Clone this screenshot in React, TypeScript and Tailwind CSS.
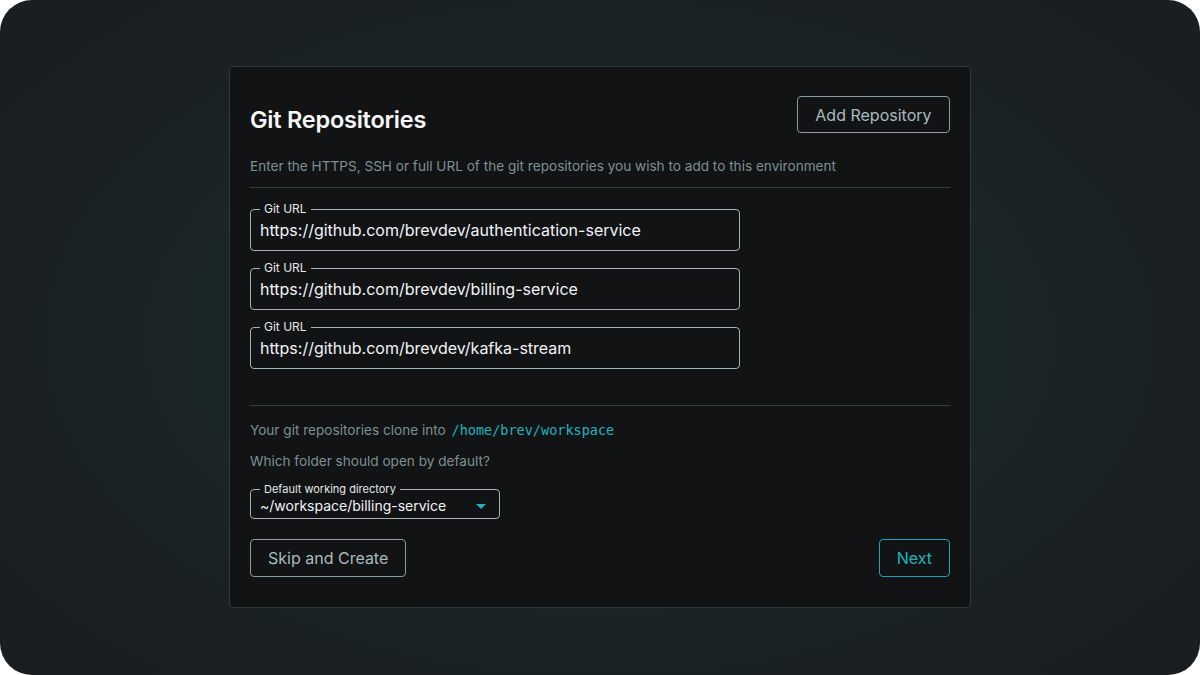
type UrlFieldProps = {
  label: string;
  value: string;
};

function UrlField({ label, value }: UrlFieldProps) {
  return (
    <fieldset className="m-0 w-[490px] min-w-0 rounded-[4px] border border-[#a3b4b6] px-[9px] pb-[10px] pt-0">
      <legend className="px-[4px] text-[12px] leading-none text-[#e4e8e9]">{label}</legend>
      <div className="pt-[5px] text-[16px] leading-[20px] text-[#f2f4f5]">{value}</div>
    </fieldset>
  );
}

const repos = [
  "https://github.com/brevdev/authentication-service",
  "https://github.com/brevdev/billing-service",
  "https://github.com/brevdev/kafka-stream",
];

export default function App() {
  return (
    <div className="h-[675px] w-full bg-white font-['Inter','Noto_Sans',sans-serif]">
      <div className="flex h-full w-full items-start justify-center rounded-[32px] bg-[radial-gradient(ellipse_60%_65%_at_50%_50%,#1b3434_0%,#1a2627_50%,#1b1e20_100%)] pt-[66px]">
        <div className="flex w-[742px] flex-col rounded-[4px] border border-[#30383a] bg-[#111315] px-[20px] pb-[30px] pt-[29px]">
          {/* Header */}
          <div className="flex items-start justify-between">
            <h1 className="pt-[10px] text-[23.5px] font-semibold leading-[28px] tracking-[-0.01em] text-[#f7f7f7]">
              Git Repositories
            </h1>
            <button className="h-[37px] rounded-[4px] border border-[#8a9c9e] px-[17.5px] text-[16px] text-[#a9babc]">
              Add Repository
            </button>
          </div>

          <p className="mt-[22px] text-[13.6px] leading-[20px] text-[#7f9093]">
            Enter the HTTPS, SSH or full URL of the git repositories you wish to add to this environment
          </p>
          <div className="mt-[11px] h-px w-full bg-[#363e40]" />

          {/* Repo URLs */}
          <div className="mt-[15px] flex flex-col gap-[11px]">
            {repos.map((r) => (
              <UrlField key={r} label="Git URL" value={r} />
            ))}
          </div>

          <div className="mt-[36px] h-px w-full bg-[#363e40]" />

          <p className="mt-[14px] text-[13.6px] leading-[20px] text-[#7f9093]">
            Your git repositories clone into{" "}
            <span className="ml-[2px] font-['DejaVu_Sans_Mono',monospace] text-[13.5px] text-[#1fb3bd]">
              /home/brev/workspace
            </span>
          </p>
          <p className="mt-[11px] text-[13.6px] leading-[20px] text-[#7f9093]">Which folder should open by default?</p>

          {/* Select */}
          <fieldset className="m-0 mt-[13px] w-[250px] min-w-0 rounded-[4px] border border-[#a3b4b6] px-[9px] pb-[3px] pt-0">
            <legend className="px-[4px] text-[11px] leading-none text-[#e4e8e9]">Default working directory</legend>
            <div className="flex items-center justify-between pt-[2px]">
              <span className="text-[14px] leading-[18px] text-[#f2f4f5]">~/workspace/billing-service</span>
              <svg width="10" height="5" viewBox="0 0 10 5" className="mr-[4px]">
                <path d="M0 0h10L5 5z" fill="#1fb3bd" />
              </svg>
            </div>
          </fieldset>

          {/* Footer */}
          <div className="mt-[20px] flex items-center justify-between">
            <button className="h-[38px] rounded-[4px] border border-[#8a9c9e] px-[17px] text-[16px] text-[#a9babc]">
              Skip and Create
            </button>
            <button className="h-[38px] rounded-[4px] border border-[#1aa6b0] px-[17px] text-[16px] text-[#1fb3bd]">
              Next
            </button>
          </div>
        </div>
      </div>
    </div>
  );
}
